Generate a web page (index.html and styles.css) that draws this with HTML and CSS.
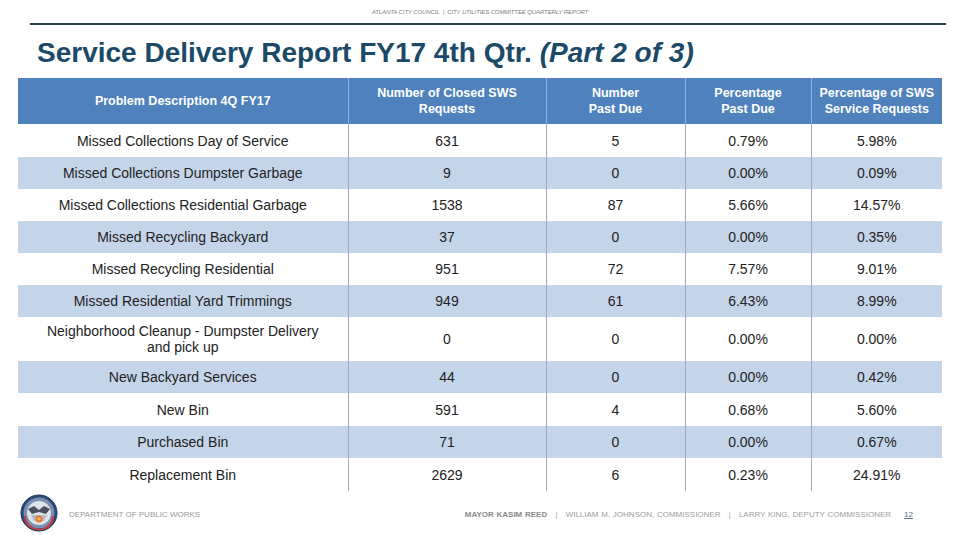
FILE: index.html
```html
<!DOCTYPE html>
<html>
<head>
<meta charset="utf-8">
<link rel="stylesheet" href="styles.css">
</head>
<body>
<div class="slide">
  <header class="topbar">
    <span class="topbar-text">ATLANTA CITY COUNCIL &nbsp;|&nbsp; CITY UTILITIES COMMITTEE QUARTERLY REPORT</span>
  </header>
  <h1 class="title">Service Delivery Report FY17 4th Qtr. <em>(Part 2 of 3)</em></h1>
  <table class="report">
    <colgroup>
      <col class="c1"><col class="c2"><col class="c3"><col class="c4"><col class="c5">
    </colgroup>
    <thead>
      <tr>
        <th>Problem Description 4Q FY17</th>
        <th>Number of Closed SWS<br>Requests</th>
        <th>Number<br>Past Due</th>
        <th>Percentage<br>Past Due</th>
        <th>Percentage of SWS<br>Service Requests</th>
      </tr>
    </thead>
    <tbody>
      <tr class="r33"><td>Missed Collections Day of Service</td><td>631</td><td>5</td><td>0.79%</td><td>5.98%</td></tr>
      <tr class="alt"><td>Missed Collections Dumpster Garbage</td><td>9</td><td>0</td><td>0.00%</td><td>0.09%</td></tr>
      <tr><td>Missed Collections Residential Garbage</td><td>1538</td><td>87</td><td>5.66%</td><td>14.57%</td></tr>
      <tr class="alt"><td>Missed Recycling Backyard</td><td>37</td><td>0</td><td>0.00%</td><td>0.35%</td></tr>
      <tr><td>Missed Recycling Residential</td><td>951</td><td>72</td><td>7.57%</td><td>9.01%</td></tr>
      <tr class="alt"><td>Missed Residential Yard Trimmings</td><td>949</td><td>61</td><td>6.43%</td><td>8.99%</td></tr>
      <tr class="tall"><td>Neighborhood Cleanup - Dumpster Delivery<br>and pick up</td><td>0</td><td>0</td><td>0.00%</td><td>0.00%</td></tr>
      <tr class="alt"><td>New Backyard Services</td><td>44</td><td>0</td><td>0.00%</td><td>0.42%</td></tr>
      <tr class="r33"><td>New Bin</td><td>591</td><td>4</td><td>0.68%</td><td>5.60%</td></tr>
      <tr class="alt"><td>Purchased Bin</td><td>71</td><td>0</td><td>0.00%</td><td>0.67%</td></tr>
      <tr class="r33"><td>Replacement Bin</td><td>2629</td><td>6</td><td>0.23%</td><td>24.91%</td></tr>
    </tbody>
  </table>
  <footer class="footer">
    <div class="footer-left">
      <svg class="seal" width="38" height="38" viewBox="0 0 38 38">
        <circle cx="19" cy="19" r="18" fill="#2b4a7a"/>
        <circle cx="19" cy="19" r="15.5" fill="#7a8fb0"/>
        <circle cx="19" cy="19" r="12" fill="#dfe3ea"/>
        <path d="M8 15 L14 12 L19 16 L24 12 L30 15 L26 20 L19 18 L12 20 Z" fill="#4a4f5c"/>
        <path d="M11 21 L27 21 L24 27 L14 27 Z" fill="#b5b9c2"/>
        <circle cx="19" cy="25" r="3.5" fill="#e07a3a"/>
        <circle cx="19" cy="25" r="1.6" fill="#f3c04a"/>
        <path d="M5 22 A14 14 0 0 0 33 22" fill="none" stroke="#c63c3c" stroke-width="2.2"/>
        <circle cx="19" cy="19" r="18" fill="none" stroke="#1e3560" stroke-width="1"/>
      </svg>
      <span class="dept">DEPARTMENT OF PUBLIC WORKS</span>
    </div>
    <div class="footer-right">
      <span class="names"><b>MAYOR KASIM REED</b> &nbsp; | &nbsp; WILLIAM M. JOHNSON, COMMISSIONER &nbsp; | &nbsp; LARRY KING, DEPUTY COMMISSIONER</span>
      <span class="page">12</span>
    </div>
  </footer>
</div>
</body>
</html>
```
FILE: styles.css
```css
html, body {
  margin: 0;
  padding: 0;
  background: #ffffff;
}
.slide {
  width: 960px;
  height: 540px;
  position: relative;
  overflow: hidden;
  font-family: "Liberation Sans", Arial, sans-serif;
}
.topbar {
  margin: 0 14px 0 30px;
  height: 23px;
  border-bottom: 2px solid #2d3e48;
  display: flex;
  justify-content: center;
  align-items: center;
  padding-right: 16px;
}
.topbar-text {
  font-size: 6px;
  font-style: italic;
  color: #7a7f86;
  letter-spacing: -0.1px;
  padding-top: 1px;
}
.title {
  margin: 12px 0 0 37px;
  height: 41px;
  font-size: 28px;
  line-height: 32px;
  font-weight: bold;
  color: #1b4a68;
  letter-spacing: 0;
}
.title em {
  font-style: italic;
}
.report {
  margin-left: 18px;
  width: 924px;
  table-layout: fixed;
  border-collapse: collapse;
  font-size: 14px;
  color: #222222;
}
.c1 { width: 330px; }
.c2 { width: 198px; }
.c3 { width: 139px; }
.c4 { width: 126px; }
.c5 { width: 131px; }
.report th {
  background: #4f81bd;
  color: #ffffff;
  font-size: 12.5px;
  font-weight: bold;
  line-height: 16px;
  height: 46px;
  padding: 0 4px;
  text-align: center;
  border-left: 1px solid #8db0e0;
}
.report td {
  height: 32px;
  padding: 0 4px;
  text-align: center;
  line-height: 16px;
  border-left: 1px solid #9aaac0;
}
.report th:first-child,
.report td:first-child {
  border-left: none;
}
.report tr.alt td {
  background: #c5d5e9;
}
.report tr.tall td {
  height: 44px;
}
.report tr.r33 td {
  height: 33px;
}
.footer {
  position: absolute;
  left: 0;
  right: 0;
  top: 493px;
  height: 40px;
  display: flex;
  justify-content: space-between;
  align-items: center;
  padding: 0 47px 0 20px;
}
.footer-left {
  display: flex;
  align-items: center;
  gap: 11px;
}
.dept {
  font-size: 8px;
  color: #9a9a9a;
  padding-top: 3px;
}
.footer-right {
  display: flex;
  align-items: center;
  gap: 13px;
  padding-top: 3px;
}
.names {
  font-size: 8px;
  color: #a0a0a0;
  word-spacing: 0.5px;
}
.names b {
  color: #8a8a8a;
}
.page {
  font-size: 8px;
  color: #5a6f8a;
  text-decoration: underline;
}
```
